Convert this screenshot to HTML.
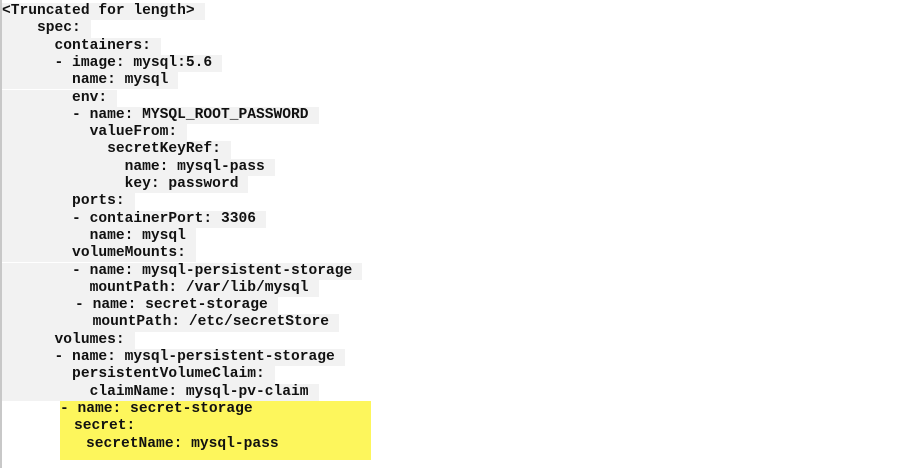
<!DOCTYPE html>
<html><head><meta charset="utf-8"><style>
html,body{margin:0;padding:0;background:#fff;width:919px;height:468px;overflow:hidden;position:relative}
.bar{position:absolute;left:0;top:0;width:2px;height:468px;background:#c8c8c8}
.l{position:absolute;left:2px;height:17.3px;line-height:17.3px;font-family:"Liberation Mono","Courier New",monospace;font-weight:bold;font-size:14.6px;color:#111;white-space:pre}
.l span{background:#f2f2f2;padding-right:10px;display:inline-block;height:17.3px}
.y{position:absolute;left:60px;top:401px;width:311px;height:59px;background:#fdf65c}
.l.h span{background:transparent}
</style></head><body>
<div class="bar"></div>
<div class="y"></div>
<div class="l" style="top:3px"><span>&lt;Truncated for length&gt;</span></div>
<div class="l" style="top:20.3px"><span>    spec:</span></div>
<div class="l" style="top:37.6px"><span>      containers:</span></div>
<div class="l" style="top:54.9px"><span>      - image: mysql:5.6</span></div>
<div class="l" style="top:72.2px"><span>        name: mysql</span></div>
<div class="l" style="top:89.5px"><span>        env:</span></div>
<div class="l" style="top:106.8px"><span>        - name: MYSQL_ROOT_PASSWORD</span></div>
<div class="l" style="top:124.1px"><span>          valueFrom:</span></div>
<div class="l" style="top:141.4px"><span>            secretKeyRef:</span></div>
<div class="l" style="top:158.7px"><span>              name: mysql-pass</span></div>
<div class="l" style="top:176px"><span>              key: password</span></div>
<div class="l" style="top:193.3px"><span>        ports:</span></div>
<div class="l" style="top:210.6px"><span>        - containerPort: 3306</span></div>
<div class="l" style="top:227.9px"><span>          name: mysql</span></div>
<div class="l" style="top:245.2px"><span>        volumeMounts:</span></div>
<div class="l" style="top:262.5px"><span>        - name: mysql-persistent-storage</span></div>
<div class="l" style="top:279.8px"><span>          mountPath: /var/lib/mysql</span></div>
<div class="l" style="top:297.1px"><span style="padding-left:3px">        - name: secret-storage</span></div>
<div class="l" style="top:314.4px"><span style="padding-left:3px">          mountPath: /etc/secretStore</span></div>
<div class="l" style="top:331.7px"><span>      volumes:</span></div>
<div class="l" style="top:349px"><span>      - name: mysql-persistent-storage</span></div>
<div class="l" style="top:366.3px"><span>        persistentVolumeClaim:</span></div>
<div class="l" style="top:383.6px"><span>          claimName: mysql-pv-claim</span></div>
<div class="l h" style="top:401px;left:60px"><span>- name: secret-storage</span></div>
<div class="l h" style="top:418.3px;left:74px"><span>secret:</span></div>
<div class="l h" style="top:435.6px;left:86px"><span>secretName: mysql-pass</span></div>
</body></html>
